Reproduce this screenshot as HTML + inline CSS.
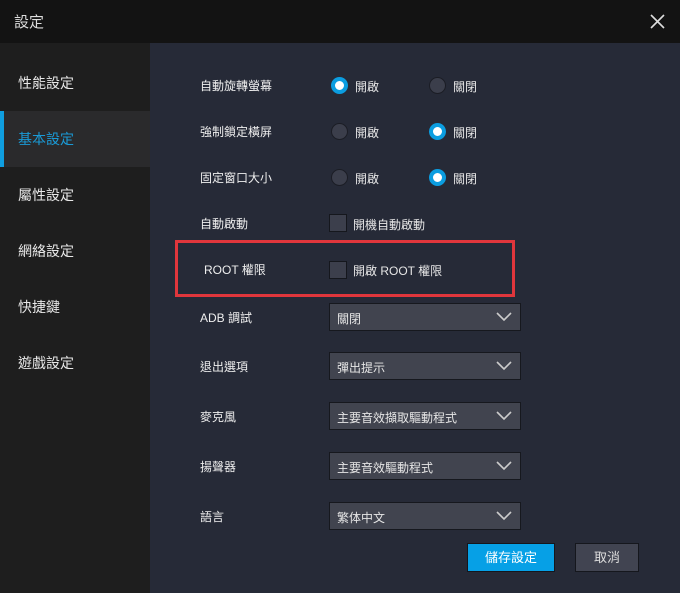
<!DOCTYPE html>
<html><head><meta charset="utf-8"><style>
*{margin:0;padding:0;box-sizing:border-box}
body{width:680px;height:593px;background:#262a37;font-family:"Liberation Sans","Noto Sans CJK TC",sans-serif;color:#e6e6e6;position:relative;overflow:hidden;font-size:12px}
.top{position:absolute;left:0;top:0;width:680px;height:43px;background:#131313}
.top .t{position:absolute;left:14px;top:11px;font-size:15px;color:#ddd}
.side{position:absolute;left:0;top:43px;width:150px;height:550px;background:#1e1e1e}
.si{position:absolute;left:18px;font-size:14px;color:#e8e8e8}
.act{position:absolute;left:0;top:111px;width:150px;height:56px;background:#2a2a2c;border-left:4px solid #0f9ee0}
.lb{position:absolute;left:200px;font-size:12px;color:#eee}
.r{position:absolute;width:17px;height:17px;border-radius:50%;background:#3b3e4b;border:1px solid #1b1d25}
.r.on{background:#fff;border:4px solid #0b9de0}
.rt{position:absolute;font-size:12px}
.cb{position:absolute;left:329px;width:18px;height:18px;background:#3c3f4c;border:1px solid #15171d}
.dd{position:absolute;left:329px;width:192px;height:28px;background:#41444f;border:1px solid #16181e;padding:6px 7px;font-size:12px}
.dd svg{position:absolute;right:8px;top:8px}
.btn{position:absolute;top:543px;height:29px;font-size:13px;text-align:center;line-height:27px;border:1px solid #15171d}
</style></head><body>
<div class="top"><span class="t">設定</span>
<svg style="position:absolute;left:650px;top:14px" width="15" height="15"><path d="M1 1L14 14M14 1L1 14" stroke="#ddd" stroke-width="1.6"/></svg></div>
<div class="side"></div>
<div class="act"></div>
<div class="si" style="top:73px">性能設定</div>
<div class="si" style="top:129px;color:#1a9ad6">基本設定</div>
<div class="si" style="top:185px">屬性設定</div>
<div class="si" style="top:241px">網絡設定</div>
<div class="si" style="top:297px">快捷鍵</div>
<div class="si" style="top:353px">遊戲設定</div>

<div class="lb" style="top:77px">自動旋轉螢幕</div>
<div class="r on" style="left:331px;top:77px"></div><div class="rt" style="left:355px;top:78px">開啟</div>
<div class="r" style="left:429px;top:77px"></div><div class="rt" style="left:453px;top:78px">關閉</div>
<div class="lb" style="top:123px">強制鎖定橫屏</div>
<div class="r" style="left:331px;top:123px"></div><div class="rt" style="left:355px;top:124px">開啟</div>
<div class="r on" style="left:429px;top:123px"></div><div class="rt" style="left:453px;top:124px">關閉</div>
<div class="lb" style="top:169px">固定窗口大小</div>
<div class="r" style="left:331px;top:169px"></div><div class="rt" style="left:355px;top:170px">開啟</div>
<div class="r on" style="left:429px;top:169px"></div><div class="rt" style="left:453px;top:170px">關閉</div>
<div class="lb" style="top:215px">自動啟動</div>
<div class="cb" style="top:214px"></div><div class="rt" style="left:353px;top:216px">開機自動啟動</div>

<div style="position:absolute;left:175px;top:240px;width:340px;height:57px;border:3px solid #e0363c"></div>
<div class="lb" style="left:204px;top:261px">ROOT 權限</div>
<div class="cb" style="top:261px"></div><div class="rt" style="left:353px;top:262px">開啟 ROOT 權限</div>

<div class="lb" style="top:309px">ADB 調試</div>
<div class="dd" style="top:303px">關閉<svg width="16" height="10"><path d="M1 1L8 8L15 1" stroke="#ccc" stroke-width="1.6" fill="none"/></svg></div>
<div class="lb" style="top:358px">退出選項</div>
<div class="dd" style="top:352px">彈出提示<svg width="16" height="10"><path d="M1 1L8 8L15 1" stroke="#ccc" stroke-width="1.6" fill="none"/></svg></div>
<div class="lb" style="top:408px">麥克風</div>
<div class="dd" style="top:402px">主要音效擷取驅動程式<svg width="16" height="10"><path d="M1 1L8 8L15 1" stroke="#ccc" stroke-width="1.6" fill="none"/></svg></div>
<div class="lb" style="top:458px">揚聲器</div>
<div class="dd" style="top:452px">主要音效驅動程式<svg width="16" height="10"><path d="M1 1L8 8L15 1" stroke="#ccc" stroke-width="1.6" fill="none"/></svg></div>
<div class="lb" style="top:508px">語言</div>
<div class="dd" style="top:502px">繁体中文<svg width="16" height="10"><path d="M1 1L8 8L15 1" stroke="#ccc" stroke-width="1.6" fill="none"/></svg></div>

<div class="btn" style="left:467px;width:88px;background:#06a0e6;color:#fff">儲存設定</div>
<div class="btn" style="left:575px;width:64px;background:#414451;color:#ddd">取消</div>
</body></html>
